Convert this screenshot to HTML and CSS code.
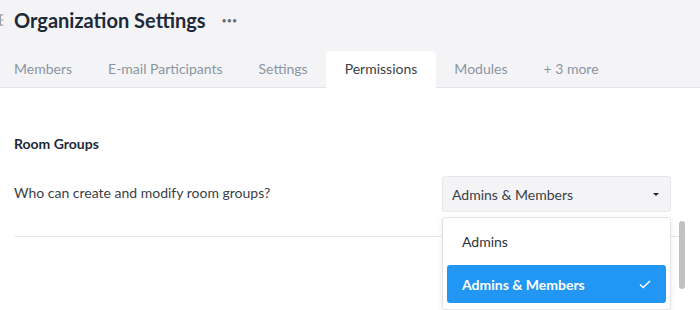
FILE: index.html
```html
<!DOCTYPE html>
<html lang="en">
<head>
    <meta charset="UTF-8">
    <title>Organization Settings</title>
    <link rel="stylesheet" href="styles.css">
</head>
<body>

<!-- Header -->
<div class="header">
    <div class="title-row">
        <svg class="side-handle" width="4" height="12" viewBox="0 0 4 12">
            <path d="M0.5 0v12M0.5 1h3M0.5 6h3M0.5 11h3" stroke="#9aa0ab" stroke-width="1" fill="none"/>
        </svg>
        <h1>Organization Settings</h1>
        <span class="more-dots">&bull;&bull;&bull;</span>
    </div>
    <div class="tabs">
        <a class="tab">Members</a>
        <a class="tab">E-mail Participants</a>
        <a class="tab">Settings</a>
        <a class="tab active">Permissions</a>
        <a class="tab">Modules</a>
        <a class="tab">+ 3 more</a>
    </div>
</div>

<!-- Content -->
<div class="content">
    <h2>Room Groups</h2>
    <div class="setting-row">
        <span class="setting-label">Who can create and modify room groups?</span>
        <div class="select-wrap">
            <div class="select">
                <span>Admins &amp; Members</span>
                <span class="caret"></span>
            </div>
            <div class="dropdown">
                <div class="option">Admins</div>
                <div class="option selected">
                    <span>Admins &amp; Members</span>
                    <svg width="12" height="9" viewBox="0 0 12 9">
                        <path d="M1 4.5l3.2 3L11 1" stroke="#fff" stroke-width="1.6" fill="none"/>
                    </svg>
                </div>
            </div>
            <div class="scrollbar"></div>
        </div>
    </div>
</div>

</body>
</html>
```

FILE: styles.css
```css
html,
body {
    height: 100%;
}

body {
    margin: 0;
    min-height: 310px;
    font-family: Lato, 'Liberation Sans', sans-serif;
    color: #1f2937;
    background: #fff;
}

/* Header */
.header {
    background-color: #f4f4f6;
    border-bottom: 1px solid #e3e4e8;
}

.title-row {
    display: flex;
    align-items: center;
    height: 40px;
}

.side-handle {
    margin-right: 10px;
}

.title-row h1 {
    margin: 0;
    font-size: 20px;
    font-weight: 700;
    color: #1e2a38;
}

.more-dots {
    margin-left: 16px;
    font-size: 9px;
    color: #6b6f76;
}

.tabs {
    display: flex;
    padding-top: 11px;
}

.tab {
    padding: 9px 18px 10px;
    font-size: 14px;
    color: #8a94a3;
    border-radius: 4px 4px 0 0;
}

.tab:first-child {
    padding-left: 14px;
}

.tab.active {
    background-color: #fff;
    color: #3a3f47;
    margin-bottom: -1px;
    padding: 9px 19px 11px;
}

/* Content */
.content {
    padding: 0 14px;
}

.content h2 {
    margin: 47px 0 0;
    font-size: 14px;
    font-weight: 700;
    color: #1e2a38;
}

.setting-row {
    display: flex;
    justify-content: space-between;
    align-items: flex-start;
    margin-top: 24px;
    padding-bottom: 24px;
    border-bottom: 1px solid #e6e7ee;
}

.setting-label {
    font-size: 14px;
    color: #3a3f47;
    padding-top: 8px;
}

.select-wrap {
    position: relative;
    width: 229px;
    margin-right: 15px;
}

.select {
    display: flex;
    justify-content: space-between;
    align-items: center;
    height: 34px;
    padding: 0 9px 0 9px;
    background-color: #f4f4f6;
    border: 1px solid #e6e7eb;
    border-radius: 3px;
    font-size: 14px;
    color: #3a3f47;
}

.caret {
    width: 0;
    height: 0;
    border-left: 3px solid transparent;
    border-right: 3px solid transparent;
    border-top: 3px solid #222;
    margin-right: 2px;
}

.dropdown {
    position: absolute;
    top: 41px;
    left: 0;
    width: 229px;
    display: flex;
    flex-direction: column;
    gap: 5px;
    padding: 4px 4px 6px;
    box-sizing: border-box;
    background-color: #fff;
    border: 1px solid #e2e3e7;
    border-radius: 3px;
    box-shadow: 0 2px 6px rgba(0, 0, 0, 0.08);
}

.option {
    display: flex;
    justify-content: space-between;
    align-items: center;
    height: 38px;
    padding: 0 15px;
    font-size: 14px;
    color: #2d3340;
    border-radius: 3px;
}

.option.selected {
    background-color: #2196f3;
    color: #fff;
    font-weight: 700;
}

.scrollbar {
    position: absolute;
    top: 45px;
    left: 237px;
    width: 6px;
    height: 68px;
    border-radius: 3px;
    background-color: #c1c1c1;
}
```
